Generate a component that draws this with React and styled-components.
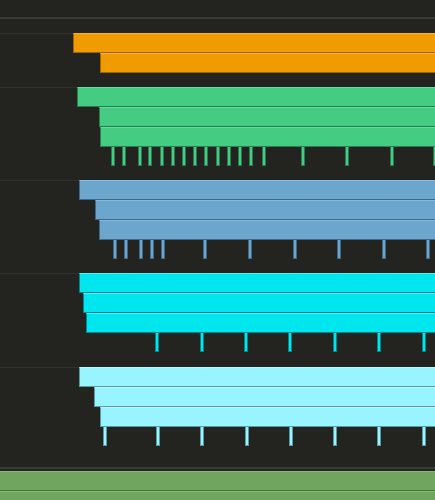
import React from 'react';
import styled, { createGlobalStyle } from 'styled-components';

const GlobalStyle = createGlobalStyle`
  html, body {
    margin: 0;
    padding: 0;
    background: #23231f;
    font-family: "Liberation Sans", Arial, sans-serif;
  }
`;

const palette = {
  orange: { fill: '#f09c00', light: '#f6b236', dark: '#9c6600' },
  green: { fill: '#44cd82', light: '#62de9c', dark: '#2a7b4f' },
  blue: { fill: '#6ca6cd', light: '#86b9db', dark: '#3f6988' },
  cyan: { fill: '#00e6ef', light: '#4af0f6', dark: '#00878e' },
  ice: { fill: '#98f5ff', light: '#b8f9ff', dark: '#5a9aa2' },
  moss: { fill: '#6fa55e', light: '#86bb72', dark: '#496f3e' },
};

const tracks = [
  {
    color: 'orange',
    bars: [73, 100],
    pad: 14,
  },
  {
    color: 'green',
    bars: [77, 99, 100],
    ticks: [111, 122, 138, 148, 160, 171, 182, 193, 204, 216, 227, 238, 249, 262, 301, 345, 390, 433],
    pad: 13,
  },
  {
    color: 'blue',
    bars: [79, 95, 99],
    ticks: [113, 124, 139, 150, 161, 203, 248, 293, 337, 382, 426],
    pad: 13,
  },
  {
    color: 'cyan',
    bars: [79, 83, 86],
    ticks: [155, 200, 244, 288, 333, 377, 422],
    pad: 14,
  },
  {
    color: 'ice',
    bars: [79, 94, 100],
    ticks: [103, 156, 200, 245, 289, 333, 377, 422],
    pad: 20,
  },
];

const Timeline = styled.div`
  width: 435px;
  height: 500px;
  overflow: hidden;
  background: #23231f;
  display: flex;
  flex-direction: column;
`;

const Ruler = styled.div`
  height: 17px;
  flex-shrink: 0;
  border-bottom: 2px solid #3a3a36;
  margin-bottom: 14px;
`;

const Track = styled.div`
  flex-shrink: 0;
  border-top: 1px solid #2f2f30;
  padding-bottom: ${(p) => p.$pad}px;
  display: flex;
  flex-direction: column;
`;

const Stack = styled.div`
  margin-top: -1px;
  display: flex;
  flex-direction: column;
`;

const Bar = styled.div`
  box-sizing: border-box;
  height: 20px;
  margin-left: ${(p) => p.$left}px;
  margin-right: -4px;
  background: ${(p) => palette[p.$color].fill};
  border-top: 1px solid ${(p) => palette[p.$color].light};
  border-bottom: 1px solid ${(p) => palette[p.$color].dark};
  border-left: 1px solid ${(p) => palette[p.$color].dark};
`;

const TickRow = styled.div`
  position: relative;
  height: 20px;
`;

const Tick = styled.span`
  position: absolute;
  top: 0;
  width: 4px;
  height: 19px;
  box-sizing: border-box;
  background: ${(p) => palette[p.$color].fill};
  border-left: 1px solid ${(p) => palette[p.$color].dark};
  border-right: 1px solid ${(p) => palette[p.$color].dark};
  border-bottom: 1px solid ${(p) => palette[p.$color].dark};
`;

const Footer = styled.div`
  flex-shrink: 0;
  border-top: 2px solid #3a3a36;
  padding-top: 2px;
  display: flex;
  flex-direction: column;
`;

const TrackView = ({ color, bars, ticks, pad }) => (
  <Track $pad={pad}>
    <Stack>
      {bars.map((left, i) => (
        <Bar key={i} $left={left} $color={color} />
      ))}
      {ticks && (
        <TickRow>
          {ticks.map((x) => (
            <Tick key={x} $color={color} style={{ left: x }} />
          ))}
        </TickRow>
      )}
    </Stack>
  </Track>
);

export default function App() {
  return (
    <>
      <GlobalStyle />
      <Timeline>
        <Ruler />
        {tracks.map((t, i) => (
          <TrackView key={i} {...t} />
        ))}
        <Footer>
          <Bar $left={-1} $color="moss" />
          <Bar $left={-1} $color="moss" />
        </Footer>
      </Timeline>
    </>
  );
}
